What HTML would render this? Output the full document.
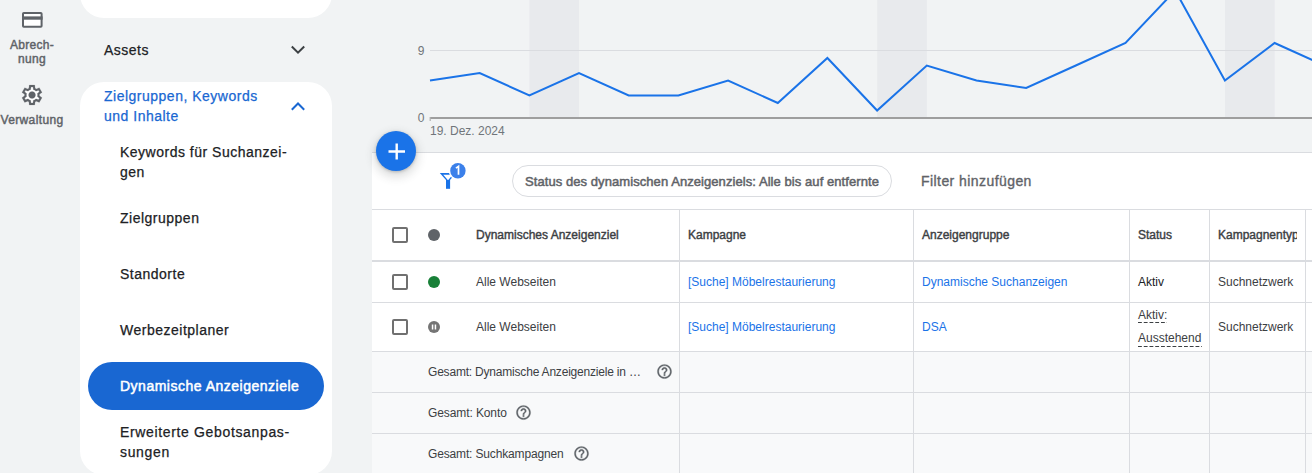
<!DOCTYPE html>
<html><head><meta charset="utf-8">
<style>
*{box-sizing:border-box;margin:0;padding:0}
html,body{width:1312px;height:473px;overflow:hidden;background:#f1f3f4;font-family:"Liberation Sans",sans-serif;position:relative}
.abs{position:absolute}
.rail{color:#5f6368;font-size:12px;font-weight:400;text-align:center;line-height:14px;-webkit-text-stroke:0.45px #5f6368}
.card{position:absolute;background:#fff;left:80px;width:252px}
.nav{position:absolute;font-size:14px;color:#202124;white-space:nowrap;line-height:20px;letter-spacing:0.5px;-webkit-text-stroke:0.25px #202124}
.t{position:absolute;white-space:nowrap;font-size:12px;color:#3c4043;line-height:14px}
.h{-webkit-text-stroke:0.4px #3c4043}
.lnk{color:#1a73e8}
.vl{position:absolute;width:1px;background:#dadce0}
.hl{position:absolute;height:1px;background:#dadce0;left:372px;width:940px}
.cb{position:absolute;left:392px;width:16px;height:16px;border:2px solid #707070;border-radius:2px}
.dot{position:absolute;left:428px;width:12px;height:12px;border-radius:50%}
.help{position:absolute}
.dsh{height:1px;background:linear-gradient(to right,#3c4043 0 3.5px,transparent 3.5px) repeat-x 0 0/5.75px 1px}
</style></head><body>

<!-- left rail -->
<svg class="abs" style="left:0;top:0" width="80" height="140">
  <rect x="23" y="13" width="18.6" height="13.8" fill="#fff" stroke="#5f6368" stroke-width="2" rx="0.8"/>
  <rect x="22" y="16.4" width="20.6" height="3.3" fill="#5f6368"/>
</svg>
<div class="abs rail" style="left:0;width:64px;top:38px;letter-spacing:0.3px">Abrech-<br>nung</div>
<svg class="abs" style="left:20px;top:83px" width="24" height="24" viewBox="0 -960 960 960"><path fill="#fff" d="M480-200a280 280 0 1 0 0-560a280 280 0 1 0 0 560z"/><path fill="#5f6368" stroke="#5f6368" stroke-width="6" d="m370-80-16-128q-13-5-24.5-12T307-235l-119 50L78-375l103-78q-1-7-1-13.5v-27q0-6.5 1-13.5L78-585l110-190 119 50q11-8 23-15t24-12l16-128h220l16 128q13 5 24.5 12t22.5 15l119-50 110 190-103 78q1 7 1 13.5v27q0 6.5-2 13.5l103 78-110 190-118-50q-11 8-23 15t-24 12L590-80H370Zm70-80h79l14-106q31-8 57.5-23.5T639-327l99 41 39-68-86-65q5-14 7-29.5t2-31.5q0-16-2-31.5t-7-29.5l86-65-39-68-99 42q-22-23-48.5-38.5T533-694l-13-106h-79l-14 106q-31 8-57.5 23.5T321-633l-99-41-39 68 86 64q-5 15-7 30t-2 32q0 16 2 31t7 30l-86 65 39 68 99-42q22 23 48.5 38.5T427-266l13 106Zm42-180q58 0 99-41t41-99q0-58-41-99t-99-41q-59 0-99.5 41T342-480q0 58 40.5 99t99.5 41Z"/></svg>
<div class="abs rail" style="left:0;width:64px;top:113px;letter-spacing:0.38px">Verwaltung</div>

<!-- nav cards -->
<div class="card" style="top:-40px;height:58px;border-radius:0 0 24px 24px"></div>
<div class="nav" style="left:104px;top:40px">Assets</div>
<svg class="abs" style="left:289px;top:41px" width="18" height="18" viewBox="0 0 18 18"><path d="M2.8 5.5l6.2 6.2 6.2-6.2" fill="none" stroke="#3c4043" stroke-width="2"/></svg>

<div class="card" style="top:82px;height:393px;border-radius:24px"></div>
<div class="nav" style="left:104px;top:86px;color:#1967d2;-webkit-text-stroke:0.25px #1967d2">Zielgruppen, Keywords<br>und Inhalte</div>
<svg class="abs" style="left:289px;top:98px" width="18" height="18" viewBox="0 0 18 18"><path d="M2.8 11.7l6.2-6.2 6.2 6.2" fill="none" stroke="#1967d2" stroke-width="2"/></svg>
<div class="nav" style="left:120px;top:142px">Keywords für Suchanzei-<br>gen</div>
<div class="nav" style="left:120px;top:208px">Zielgruppen</div>
<div class="nav" style="left:120px;top:264px">Standorte</div>
<div class="nav" style="left:120px;top:320px">Werbezeitplaner</div>
<div class="abs" style="left:88px;top:362px;width:236px;height:48px;border-radius:24px;background:#1967d2"></div>
<div class="nav" style="left:120px;top:376px;color:#fff;-webkit-text-stroke:0.5px #fff">Dynamische Anzeigenziele</div>
<div class="nav" style="left:120px;top:422px;letter-spacing:0.65px">Erweiterte Gebotsanpas-<br>sungen</div>

<!-- chart -->
<svg class="abs" style="left:0;top:0" width="1312" height="152">
  <rect x="529.4" y="0" width="49.68" height="117" fill="#e8eaed"/>
  <rect x="877.2" y="0" width="49.68" height="117" fill="#e8eaed"/>
  <rect x="1225" y="0" width="49.68" height="117" fill="#e8eaed"/>
  <line x1="430" y1="50.5" x2="1312" y2="50.5" stroke="#dadce0" stroke-width="1"/>
  <line x1="430" y1="118" x2="1312" y2="118" stroke="#9e9e9e" stroke-width="2"/><line x1="430.2" y1="117" x2="430.2" y2="121" stroke="#b0b0b0" stroke-width="1.2"/>
  <text x="424.5" y="54.5" font-family="Liberation Sans" font-size="12" fill="#70757a" text-anchor="end">9</text>
  <text x="424.5" y="122" font-family="Liberation Sans" font-size="12" fill="#70757a" text-anchor="end">0</text>
  <text x="430" y="134.5" font-family="Liberation Sans" font-size="12" fill="#70757a">19. Dez. 2024</text>
  <polyline fill="none" stroke="#1a73e8" stroke-width="2" stroke-linejoin="miter" points="430.0,80.5 479.7,73.0 529.4,95.5 579.0,73.0 628.7,95.5 678.4,95.5 728.1,80.5 777.8,103.0 827.4,58.0 877.1,110.5 926.8,65.5 976.5,80.5 1026.2,88.0 1075.8,65.5 1125.5,43.0 1175.2,-9.5 1224.9,80.5 1274.6,43.0 1324.2,65.5"/>
</svg>

<!-- grid -->
<div class="abs" style="background:#fff;left:372px;top:152px;width:940px;height:321px;border-top:1px solid #dadce0"></div>
<div class="hl" style="top:209px"></div>
<div class="hl" style="top:260px;height:2px"></div>
<div class="hl" style="top:302px"></div>
<div class="abs" style="left:372px;top:351px;width:940px;height:122px;background:#f8f9fa"></div>
<div class="hl" style="top:351px"></div>
<div class="hl" style="top:392px"></div>
<div class="hl" style="top:433px"></div>
<div class="vl" style="left:679px;top:210px;height:263px"></div>
<div class="vl" style="left:913px;top:210px;height:263px"></div>
<div class="vl" style="left:1129px;top:210px;height:263px"></div>
<div class="vl" style="left:1209px;top:210px;height:263px"></div>
<div class="vl" style="left:1305px;top:210px;height:263px"></div>

<!-- FAB -->
<div class="abs" style="left:376px;top:131px;width:40px;height:40px;border-radius:50%;background:#1a73e8;box-shadow:0 1px 3px rgba(60,64,67,.3),0 4px 8px 3px rgba(60,64,67,.15)"></div>
<svg class="abs" style="left:387.5px;top:142.5px" width="17" height="17" viewBox="0 0 17 17"><path d="M8.7 0.5v16M0.5 8.5h16.5" stroke="#fff" stroke-width="2.4"/></svg>

<!-- filter row -->
<svg class="abs" style="left:432px;top:158px" width="40" height="36" viewBox="0 0 40 36">
  <path d="M7.8 15L24.2 15L16 24.2Z M11.2 16.8L20.8 16.8L16 22.2Z" fill="#1a73e8" fill-rule="evenodd"/>
  <rect x="14" y="22" width="4.1" height="8.8" fill="#1a73e8"/>
  <circle cx="25.9" cy="12.8" r="9.2" fill="#fff"/>
  <circle cx="25.9" cy="12.8" r="7.7" fill="#3b80ea"/>
  <path d="M23.9 10.1l2.6-1.7v8.4" fill="none" stroke="#fff" stroke-width="1.7"/>
</svg>
<div class="abs" style="left:512px;top:165px;width:380px;height:32px;border:1px solid #dadce0;border-radius:16px"></div>
<div class="t h" style="left:525px;top:174.5px;font-size:13px;color:#5f6368;-webkit-text-stroke:0.5px #5f6368;letter-spacing:0.07px">Status des dynamischen Anzeigenziels: Alle bis auf entfernte</div>
<div class="t" style="left:921px;top:174px;font-size:14px;color:#5f6368;letter-spacing:0.43px;-webkit-text-stroke:0.35px #5f6368">Filter hinzufügen</div>

<!-- header -->
<div class="cb" style="top:227px"></div>
<div class="dot" style="top:229px;background:#5f6368"></div>
<div class="t h" style="left:476px;top:228px">Dynamisches Anzeigenziel</div>
<div class="t h" style="left:688px;top:228px">Kampagne</div>
<div class="t h" style="left:922px;top:228px">Anzeigengruppe</div>
<div class="t h" style="left:1138px;top:228px">Status</div>
<div class="t h" style="left:1218px;top:228px;width:79px;overflow:hidden">Kampagnentyp</div>

<!-- row 1 -->
<div class="cb" style="top:274px"></div>
<div class="dot" style="top:276px;background:#188038"></div>
<div class="t" style="left:476px;top:275px">Alle Webseiten</div>
<div class="t lnk" style="left:688px;top:275px">[Suche] Möbelrestaurierung</div>
<div class="t lnk" style="left:922px;top:275px">Dynamische Suchanzeigen</div>
<div class="t" style="left:1138px;top:275px;color:#202124">Aktiv</div>
<div class="t" style="left:1218px;top:275px">Suchnetzwerk</div>

<!-- row 2 -->
<div class="cb" style="top:319px"></div>
<svg class="abs" style="left:428px;top:321px" width="12" height="12" viewBox="0 0 12 12"><circle cx="6" cy="6" r="6" fill="#757575"/><rect x="3.8" y="3.5" width="1.5" height="5" fill="#fff"/><rect x="6.7" y="3.5" width="1.5" height="5" fill="#fff"/></svg>
<div class="t" style="left:476px;top:320px">Alle Webseiten</div>
<div class="t lnk" style="left:688px;top:320px">[Suche] Möbelrestaurierung</div>
<div class="t lnk" style="left:922px;top:320px">DSA</div>
<div class="t" style="left:1138px;top:307.5px">Aktiv:</div><div class="t" style="left:1138px;top:331.3px">Ausstehend</div><div class="abs dsh" style="left:1138px;top:322px;width:29px"></div><div class="abs dsh" style="left:1138px;top:346px;width:64px"></div>
<div class="t" style="left:1218px;top:320px">Suchnetzwerk</div>

<!-- summary -->
<div class="t" style="left:428px;top:365.3px;letter-spacing:-0.2px">Gesamt: Dynamische Anzeigenziele in …</div>
<div class="t" style="left:428px;top:406px;letter-spacing:-0.1px">Gesamt: Konto</div>
<div class="t" style="left:428px;top:446.5px;letter-spacing:-0.15px">Gesamt: Suchkampagnen</div>
<svg class="help" style="left:655.5px;top:363px" width="17" height="17" viewBox="0 0 24 24"><path fill="#5f6368" stroke="#5f6368" stroke-width="0.4" d="M11 18h2v-2h-2v2zm1-16C6.48 2 2 6.48 2 12s4.480 10 10 10 10-4.48 10-10S17.52 2 12 2zm0 18c-4.41 0-8-3.59-8-8s3.59-8 8-8 8 3.59 8 8-3.59 8-8 8zm0-14c-2.21 0-4 1.790-4 4h2c0-1.1.9-2 2-2s2 .9 2 2c0 2-3 1.75-3 5h2c0-2.25 3-2.5 3-5 0-2.21-1.79-4-4-4z"/></svg>
<svg class="help" style="left:514.5px;top:404px" width="17" height="17" viewBox="0 0 24 24"><path fill="#5f6368" stroke="#5f6368" stroke-width="0.4" d="M11 18h2v-2h-2v2zm1-16C6.48 2 2 6.48 2 12s4.480 10 10 10 10-4.48 10-10S17.52 2 12 2zm0 18c-4.41 0-8-3.59-8-8s3.59-8 8-8 8 3.590 8 8-3.59 8-8 8zm0-14c-2.21 0-4 1.79-4 4h2c0-1.1.9-2 2-2s2 .9 2 2c0 2-3 1.75-3 5h2c0-2.25 3-2.5 3-5 0-2.21-1.79-4-4-4z"/></svg>
<svg class="help" style="left:572.5px;top:445px" width="17" height="17" viewBox="0 0 24 24"><path fill="#5f6368" stroke="#5f6368" stroke-width="0.4" d="M11 18h2v-2h-2v2zm1-16C6.48 2 2 6.48 2 12s4.48 10 10 10 10-4.48 10-10S17.52 2 12 2zm0 18c-4.41 0-8-3.59-8-8s3.59-8 8-8 8 3.59 8 8-3.59 8-8 8zm0-14c-2.21 0-4 1.79-4 4h2c0-1.1.9-2 2-2s2 .9 2 2c0 2-3 1.75-3 5h2c0-2.25 3-2.5 3-5 0-2.21-1.79-4-4-4z"/></svg>
</body></html>
